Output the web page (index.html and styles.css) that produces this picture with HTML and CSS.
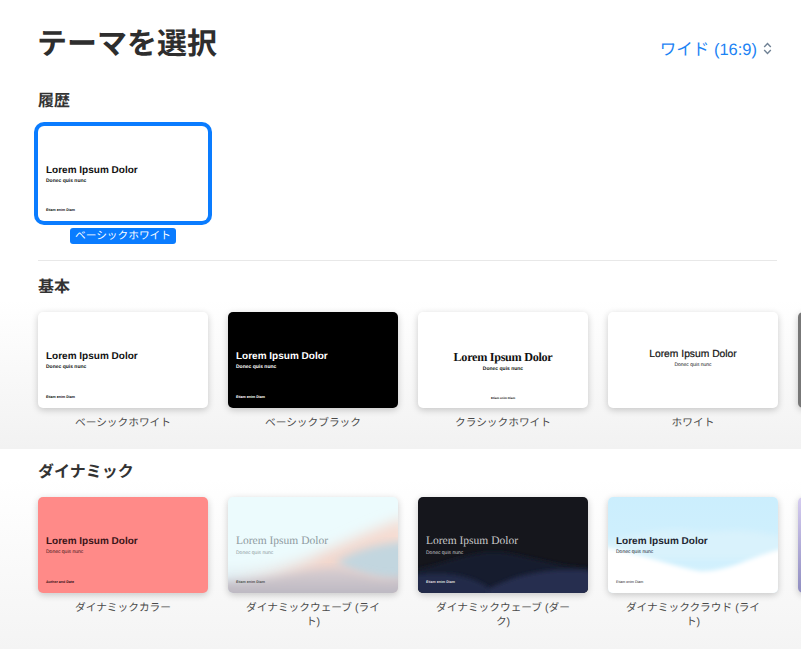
FILE: index.html
```html
<!DOCTYPE html>
<html lang="ja">

<head>
    <meta charset="UTF-8">
    <title>テーマを選択</title>
    <link rel="stylesheet" href="styles.css">
</head>

<body>
    <div class="head">
        <h1>テーマを選択</h1>
        <div class="ratio">ワイド (16:9)
            <svg class="updown" width="9" height="13" viewBox="0 0 9 13">
                <path d="M1.2 5 L4.5 1.6 L7.8 5 M1.2 8 L4.5 11.4 L7.8 8" fill="none" />
            </svg>
        </div>
    </div>

    <section class="recent">
        <h2>履歴</h2>
        <div class="row">
            <div class="theme picked">
                <div class="slide left">
                    <div class="big">Lorem Ipsum Dolor</div>
                    <div class="sub">Donec quis nunc</div>
                    <div class="foot">Etiam enim Diam</div>
                </div>
                <div class="name">ベーシックホワイト</div>
            </div>
        </div>
    </section>

    <section class="basic">
        <div class="rule"></div>
        <h2>基本</h2>
        <div class="row">
            <div class="theme">
                <div class="slide left">
                    <div class="big">Lorem Ipsum Dolor</div>
                    <div class="sub">Donec quis nunc</div>
                    <div class="foot">Etiam enim Diam</div>
                </div>
                <div class="name">ベーシックホワイト</div>
            </div>
            <div class="theme">
                <div class="slide left black">
                    <div class="big">Lorem Ipsum Dolor</div>
                    <div class="sub">Donec quis nunc</div>
                    <div class="foot">Etiam enim Diam</div>
                </div>
                <div class="name">ベーシックブラック</div>
            </div>
            <div class="theme">
                <div class="slide classic">
                    <div class="big">Lorem Ipsum Dolor</div>
                    <div class="sub">Donec quis nunc</div>
                    <div class="foot">Etiam enim Diam</div>
                </div>
                <div class="name">クラシックホワイト</div>
            </div>
            <div class="theme">
                <div class="slide plain">
                    <div class="big">Lorem Ipsum Dolor</div>
                    <div class="sub">Donec quis nunc</div>
                </div>
                <div class="name">ホワイト</div>
            </div>
            <div class="theme">
                <div class="slide next-grey"></div>
            </div>
        </div>
    </section>

    <section class="dynamic">
        <h2>ダイナミック</h2>
        <div class="row">
            <div class="theme">
                <div class="slide left coral">
                    <div class="big">Lorem Ipsum Dolor</div>
                    <div class="sub">Donec quis nunc</div>
                    <div class="foot">Author and Date</div>
                </div>
                <div class="name">ダイナミックカラー</div>
            </div>
            <div class="theme">
                <div class="slide left wave-light">
                    <svg class="art" viewBox="0 0 170 96" preserveAspectRatio="none">
                        <defs>
                            <linearGradient id="peach" x1="0" y1="0" x2="1" y2="0">
                                <stop offset="0" stop-color="#dcecf3" />
                                <stop offset="0.55" stop-color="#f2d5cb" />
                                <stop offset="1" stop-color="#f6dcd2" />
                            </linearGradient>
                            <linearGradient id="mauve" x1="0" y1="0" x2="0" y2="1">
                                <stop offset="0" stop-color="#d9cfd2" />
                                <stop offset="1" stop-color="#b3b1bd" />
                            </linearGradient>
                            <filter id="soft"><feGaussianBlur stdDeviation="7" /></filter>
                            <filter id="soft1"><feGaussianBlur stdDeviation="4" /></filter>
                        </defs>
                        <path d="M-10 74 C30 78 55 70 80 62 C110 50 140 34 180 20 L180 106 L-10 106 Z" fill="url(#peach)" filter="url(#soft)" />
                        <path d="M108 66 C122 56 140 48 180 44 L180 84 C150 84 130 78 108 66 Z" fill="#c2d6df" filter="url(#soft1)" />
                        <path d="M-10 84 C40 86 70 72 108 70 C130 72 150 88 180 78 L180 106 L-10 106 Z" fill="url(#mauve)" filter="url(#soft1)" />
                    </svg>
                    <div class="big serif">Lorem Ipsum Dolor</div>
                    <div class="sub serif-sub">Donec quis nunc</div>
                    <div class="foot">Etiam enim Diam</div>
                </div>
                <div class="name">ダイナミックウェーブ (ライト)</div>
            </div>
            <div class="theme">
                <div class="slide left wave-dark">
                    <svg class="art" viewBox="0 0 170 96" preserveAspectRatio="none">
                        <defs>
                            <filter id="soft2"><feGaussianBlur stdDeviation="2" /></filter>
                        </defs>
                        <path d="M0 72 C30 66 60 50 90 56 C120 62 145 70 170 70 L170 96 L0 96 Z" fill="#191d2e" filter="url(#soft2)" />
                        <path d="M-4 78 C30 74 50 78 70 90 L80 100 L-4 100 Z" fill="#232a49" filter="url(#soft2)" />
                        <path d="M70 92 C100 76 135 70 174 74 L174 100 L70 100 Z" fill="#252d50" filter="url(#soft2)" />
                    </svg>
                    <div class="big serif">Lorem Ipsum Dolor</div>
                    <div class="sub serif-sub">Donec quis nunc</div>
                    <div class="foot">Etiam enim Diam</div>
                </div>
                <div class="name">ダイナミックウェーブ (ダーク)</div>
            </div>
            <div class="theme">
                <div class="slide left cloud">
                    <svg class="art" viewBox="0 0 170 96" preserveAspectRatio="none">
                        <defs>
                            <filter id="soft3"><feGaussianBlur stdDeviation="3" /></filter>
                            <filter id="soft4"><feGaussianBlur stdDeviation="2" /></filter>
                        </defs>
                        <path d="M-4 46 C30 36 60 30 85 34 C110 38 125 28 174 40 L174 62 L-4 62 Z" fill="#d9f2fc" filter="url(#soft3)" />
                        <path d="M-4 50 C30 56 60 68 90 74 C120 76 140 60 174 52 L174 100 L-4 100 Z" fill="#fff" filter="url(#soft4)" />
                    </svg>
                    <div class="big">Lorem Ipsum Dolor</div>
                    <div class="sub">Donec quis nunc</div>
                    <div class="foot">Etiam enim Diam</div>
                </div>
                <div class="name">ダイナミッククラウド (ライト)</div>
            </div>
            <div class="theme">
                <div class="slide next-violet"></div>
            </div>
        </div>
    </section>
</body>

</html>
```

FILE: styles.css
```css
* {
    box-sizing: border-box;
}

html,
body {
    margin: 0;
    height: 649px;
    overflow: hidden;
}

body {
    width: 801px;
    background-color: #fff;
    color: #2b2b2b;
    font-family: "Liberation Sans", "Noto Sans CJK JP", sans-serif;
    text-rendering: geometricPrecision;
}

.head {
    display: flex;
    justify-content: space-between;
    align-items: center;
    height: 88px;
    padding: 2px 29px 0 37px;
}

h1 {
    margin: 0;
    font-size: 30px;
    line-height: 40px;
    font-weight: 700;
    color: #2e2e2e;
}

.ratio {
    display: flex;
    align-items: center;
    gap: 6px;
    font-size: 16.5px;
    color: #1c83f4;
    padding-top: 6px;
}

.updown path {
    stroke: #6f8194;
    stroke-width: 1.4;
}

h2 {
    margin: 0;
    padding-top: 1px;
    font-size: 16px;
    line-height: 24px;
    font-weight: 700;
    color: #333;
}

section {
    padding-left: 38px;
    overflow: hidden;
}

.row {
    display: flex;
    gap: 20px;
    margin-top: 12px;
}

.theme {
    flex: 0 0 170px;
    width: 170px;
}

.slide {
    position: relative;
    display: flex;
    flex-direction: column;
    height: 96px;
    background: #fff;
    border-radius: 5px;
    box-shadow: 0 2px 7px rgba(0, 0, 0, 0.2);
    overflow: hidden;
    color: #111;
}

.slide > div {
    position: relative;
}

.art {
    position: absolute;
    top: 0;
    left: 0;
    width: 100%;
    height: 100%;
}

.big {
    font-size: 10px;
    line-height: 13px;
    font-weight: 700;
    white-space: nowrap;
}

.sub {
    margin-top: 1px;
    font-size: 5px;
    line-height: 6px;
    font-weight: 700;
    white-space: nowrap;
}

.foot {
    font-size: 3.6px;
    line-height: 5px;
    font-weight: 700;
    white-space: nowrap;
}

.name {
    margin: 8px auto 0;
    width: 140px;
    font-size: 10.7px;
    line-height: 14px;
    text-align: center;
    color: #4a4a4a;
}

.left {
    padding: 38px 0 0 8px;
}

.left .foot {
    margin-top: auto;
    margin-bottom: 8px;
}

/* 履歴 */
.recent {
    height: 172px;
    padding-top: 1px;
}

.recent .row {
    padding-top: 4px;
    margin-top: 8px;
    margin-left: -4px;
    padding-left: 4px;
}

.picked .slide {
    box-shadow: 0 0 0 4px #0a7cff;
    height: 95px;
    border-radius: 6px;
}

.picked .name {
    width: fit-content;
    margin: 7px auto 0;
    padding: 0 5px;
    background: #0a7cff;
    color: #fff;
    border-radius: 3px;
    line-height: 16px;
}

/* 基本 */
.basic {
    height: 189px;
    background: linear-gradient(#fff 40px, #f2f2f2 100%);
}

.rule {
    height: 1px;
    width: 739px;
    background: #e8e8e8;
    margin-bottom: 14px;
}

.black {
    background: #000;
    color: #fff;
}

.classic {
    align-items: center;
    padding-top: 39px;
}

.classic .big {
    font-family: "Liberation Serif", serif;
    font-size: 12.2px;
    letter-spacing: -0.3px;
}

.classic .sub {
    margin-top: 2px;
}

.classic .foot {
    margin-top: auto;
    margin-bottom: 7px;
    font-size: 3px;
}

.plain {
    align-items: center;
    padding-top: 36px;
}

.plain .big {
    font-size: 10.3px;
    font-weight: 400;
    -webkit-text-stroke: 0.2px #111;
}

.plain .sub {
    font-weight: 400;
}

.next-grey {
    background: #777;
}

/* ダイナミック */
.dynamic {
    height: 200px;
    padding-top: 11px;
    background: linear-gradient(#fff 30px, #f4f4f4 100%);
}

.coral {
    background: #ff8a88;
    color: #3a1418;
}

.coral .sub {
    font-weight: 400;
}

.big.serif {
    font-family: "Liberation Serif", serif;
    font-weight: 400;
    font-size: 11.5px;
}

.serif-sub {
    font-weight: 400;
    margin-top: 2px;
}

.wave-light {
    background: #ecfbfd;
    color: #8e9aa0;
}

.wave-light .foot {
    color: #555;
}

.wave-dark {
    background: #15161c;
    color: #c9c9c9;
}

.wave-dark .foot {
    color: #ddd;
}

.cloud {
    background: linear-gradient(#cbeefd, #d4f1fd);
    color: #1d2530;
}

.cloud .sub {
    font-weight: 400;
}

.cloud .foot {
    font-weight: 400;
}

.next-violet {
    background: linear-gradient(#d5ccf0, #8f8dc0);
}
```
